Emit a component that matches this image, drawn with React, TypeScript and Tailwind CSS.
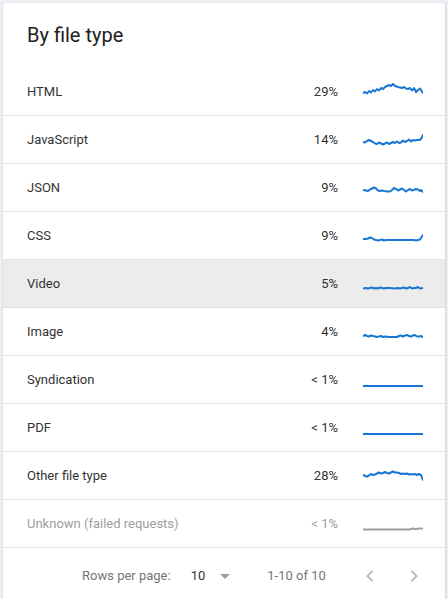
const rows: { name: string; pct: string; pts: string; muted?: boolean; hover?: boolean }[] = [
  {
    name: "HTML",
    pct: "29%",
    pts: "0,13 2,12 4,13.5 6,11 8,12.5 10,10 12,11.5 14,9 16,10.5 18,8 20,9 22,7 24,6 26,5 28,6 30,4 32,6 35,7 37,7.5 39,8 41,7 43,8.5 45,9 47,8 49,10.5 51,8 53,12 55,10 57,8.5 60,13",
  },
  {
    name: "JavaScript",
    pct: "14%",
    pts: "0,14 2,14.5 4,13 6,12 8,13 10,14 12,15.5 14,16 16,14.5 18,15.5 20,16.5 22,15.5 24,14.5 26,16 28,15 30,14 32,15 34,13.5 36,15 38,14.5 40,12.5 42,14 44,13 46,11.5 48,13.5 50,12 52,12.5 54,12 56,12 58,11 60,7",
  },
  {
    name: "JSON",
    pct: "9%",
    pts: "0,14 3,14.5 5,15 7,13.5 9,12.5 11,11.5 13,12.5 15,14.5 17,15 19,14.5 21,15 25,15.5 27,15.5 29,14 31,12 33,13 35,14.5 37,13.5 39,12.5 41,14 43,15.5 45,14 47,13 49,14.5 51,14 53,13 55,13.5 57,15 58,14 60,16",
  },
  {
    name: "CSS",
    pct: "9%",
    pts: "0,15 3,15 5,14.5 7,13.5 9,14 11,15.5 13,16 15,16.5 17,16 19,15.5 21,16.5 23,16 27,16 31,16 35,16 39,16 43,16 47,16 51,16 53,16.5 55,16 57,15.5 58,14 60,11",
  },
  {
    name: "Video",
    pct: "5%",
    hover: true,
    pts: "0,16.5 3,16 5,16.5 7,16 9,15.5 11,16.5 13,16 15,16.5 17,15.5 19,16 21,16.5 23,16 27,16 31,16.5 35,16 37,16.5 39,16 41,15.5 43,16.5 45,16 47,15 49,16.5 51,16 53,16 55,15 57,16.5 60,16",
  },
  {
    name: "Image",
    pct: "4%",
    pts: "0,16 2,15 4,16 6,16.5 8,15.5 10,16 12,16.5 14,17 16,16.5 18,16 20,17 22,16.5 26,17 30,17 34,17 36,16 38,15.5 40,16.5 42,15.5 44,15 46,16 48,16.5 50,15.5 52,15 54,16.5 56,16.5 58,16 60,17",
  },
  { name: "Syndication", pct: "< 1%", pts: "0,18 60,18" },
  { name: "PDF", pct: "< 1%", pts: "0,18 60,18" },
  {
    name: "Other file type",
    pct: "28%",
    pts: "0,11 2,12 4,12.5 6,11.5 8,10 10,11 12,10.5 14,9.5 16,8.5 18,9.5 20,9 22,8 24,9 26,9.5 28,8.5 30,7.5 32,8.5 34,8.5 36,9 38,10 40,9.5 42,10 44,9.5 46,10.5 48,10 50,10.5 52,10 54,11 56,10 58,11 60,16",
  },
  {
    name: "Unknown (failed requests)",
    pct: "< 1%",
    muted: true,
    pts: "0,17.5 46,17.5 48,17 50,16.5 52,17 54,17 56,16.5 60,16.5",
  },
];

function Sparkline({ pts, muted }: { pts: string; muted?: boolean }) {
  return (
    <svg width="60" height="24" viewBox="0 0 60 24" className="shrink-0">
      <polyline
        points={pts}
        fill="none"
        stroke={muted ? "#9e9e9e" : "#1976d2"}
        strokeWidth="2"
        strokeLinejoin="round"
        strokeLinecap="round"
      />
    </svg>
  );
}

export default function App() {
  return (
    <div className="min-h-[599px] bg-[#eceff4] pt-[3px] pl-[2px] pr-[3px] font-['Roboto',sans-serif] overflow-hidden">
      <div className="bg-white rounded-t-[3px] border-l border-[#dfe3ea] shadow-[1px_0_2px_rgba(0,0,0,0.12)] h-[620px]">
        <div className="h-[65px] flex items-center pl-6 pb-[2px]">
          <h2 className="text-[20px] leading-none text-[#212121] pt-[1px]">By file type</h2>
        </div>
        {rows.map((r) => (
          <div
            key={r.name}
            className={`h-12 flex items-center pl-6 pr-[22px] border-b border-[#e0e0e0] text-[13px] ${
              r.hover ? "bg-[#ececec]" : ""
            } ${r.muted ? "text-[#9e9e9e]" : "text-[#333333]"}`}
          >
            <span className="flex-1">{r.name}</span>
            <span className="w-[60px] text-right">{r.pct}</span>
            <span className="w-[25px]" />
            <Sparkline pts={r.pts} muted={r.muted} />
          </div>
        ))}
        <div className="h-14 flex items-center text-[13px] text-[#757575] pl-[79px]">
          <span>Rows per page:</span>
          <span className="ml-[20px] text-[#333333]">10</span>
          <svg width="10" height="5" viewBox="0 0 10 5" className="ml-[15px]">
            <path d="M0 0 L10 0 L5 5 Z" fill="#9e9e9e" />
          </svg>
          <span className="ml-[37px]">1-10 of 10</span>
          <svg width="24" height="24" viewBox="0 0 24 24" className="ml-[32px]">
            <path d="M15.4 7.4 14 6l-6 6 6 6 1.4-1.4L10.8 12z" fill="#bdbdbd" />
          </svg>
          <svg width="24" height="24" viewBox="0 0 24 24" className="ml-[20px]">
            <path d="M10 6 8.6 7.4 13.2 12l-4.6 4.6L10 18l6-6z" fill="#bdbdbd" />
          </svg>
        </div>
      </div>
    </div>
  );
}
